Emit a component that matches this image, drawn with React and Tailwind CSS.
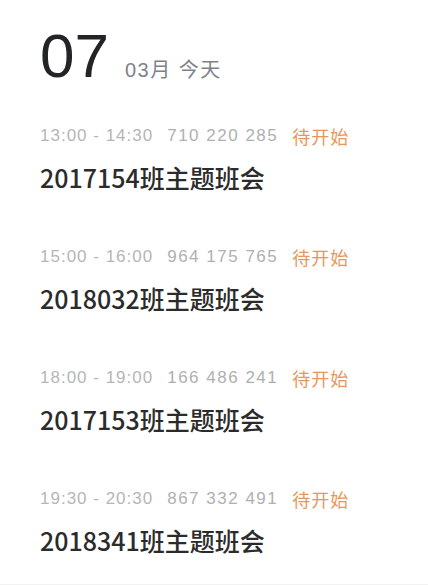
import React from "react";

const meetings = [
  { time: "13:00 - 14:30", code: "710 220 285", title: "2017154班主题班会" },
  { time: "15:00 - 16:00", code: "964 175 765", title: "2018032班主题班会" },
  { time: "18:00 - 19:00", code: "166 486 241", title: "2017153班主题班会" },
  { time: "19:30 - 20:30", code: "867 332 491", title: "2018341班主题班会" },
];

const font = { fontFamily: '"Liberation Sans", "Noto Sans CJK SC", sans-serif' };
const cjk = { fontFamily: '"Noto Sans CJK SC", sans-serif' };

export default function App() {
  return (
    <div
      className="h-[585px] w-[428px] overflow-hidden border-b border-[#f2f2f2] bg-white px-[40px] pt-[23px]"
      style={font}
    >
      {/* Date header */}
      <div className="flex items-baseline">
        <span className="text-[62px] font-light leading-[66px] text-[#222428]">07</span>
        <span className="ml-[16px] text-[20px] tracking-[1.5px] text-[#7e828a]">03月 今天</span>
      </div>

      {/* Meetings */}
      <div className="mt-[37px] flex flex-col gap-[55px]">
        {meetings.map((m) => (
          <div key={m.code}>
            <div className="flex items-center gap-[14px] text-[17px] leading-[20px] tracking-[1px] text-[#b6b6b6]">
              <span>{m.time}</span>
              <span className="tracking-[1.5px] text-[#b0b0b0]">{m.code}</span>
              <span className="text-[18px] tracking-[1px] text-[#e8975a]" style={cjk}>
                待开始
              </span>
            </div>
            <div className="mt-[16px] text-[25px] font-medium leading-[30px] text-[#2b2b2b]" style={cjk}>
              {m.title}
            </div>
          </div>
        ))}
      </div>
    </div>
  );
}
